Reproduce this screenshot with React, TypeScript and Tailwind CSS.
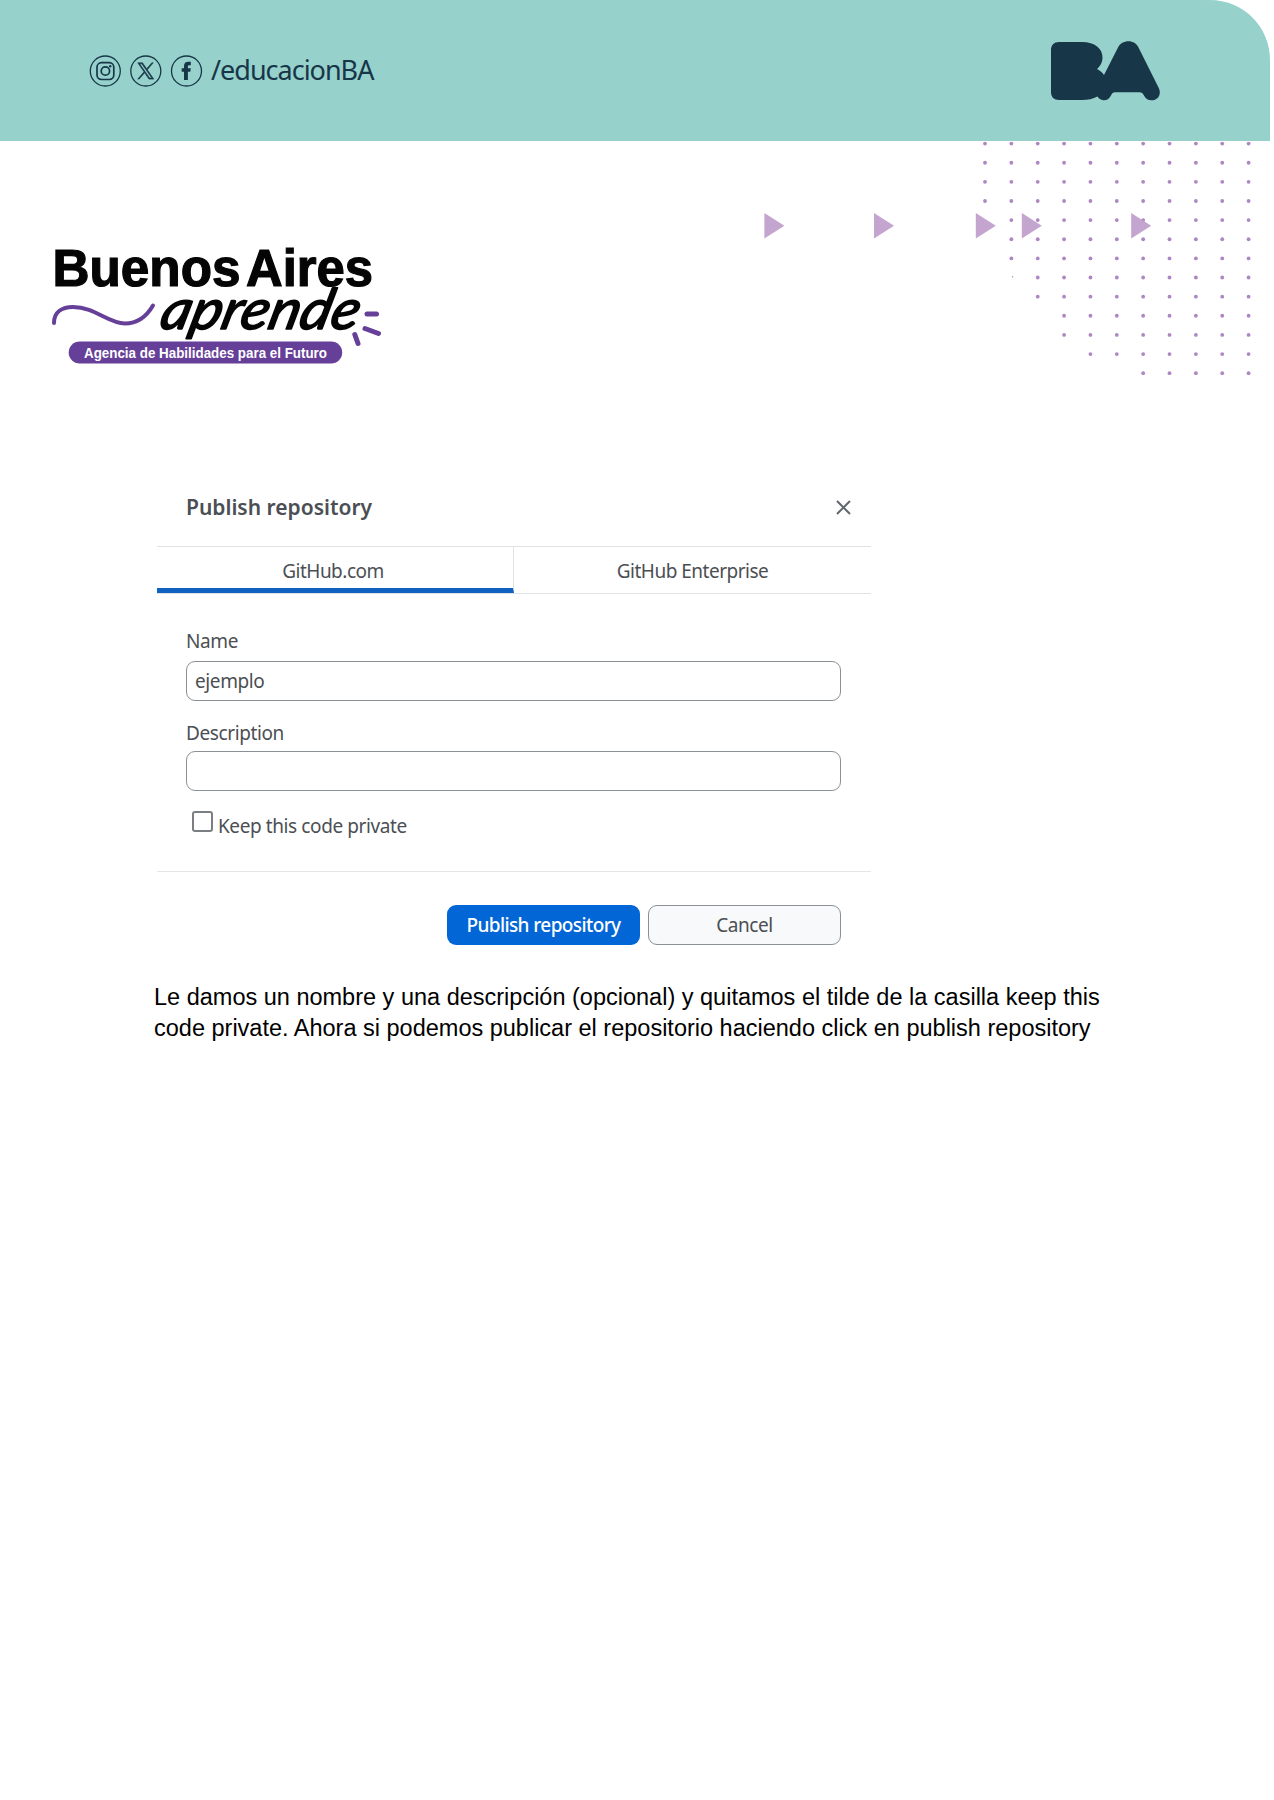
const PURPLE = "#653f98";
const NAVY = "#173647";

function SocialIcons() {
  return (
    <svg width="116" height="34" viewBox="88 53 116 34" fill="none" stroke={NAVY}>
      <g strokeWidth="1.3">
        <circle cx="105.3" cy="70" r="15" />
        <circle cx="145.8" cy="70" r="15" />
        <circle cx="186.5" cy="70" r="15" />
      </g>
      <g strokeWidth="1.7">
        <rect x="97" y="61.7" width="16.8" height="16.8" rx="4.4" />
        <circle cx="105.4" cy="70" r="4.2" />
      </g>
      <circle cx="110.2" cy="65.2" r="1.2" fill={NAVY} stroke="none" />
      <g transform="translate(137.6 61.800) scale(0.68)">
        <path
          d="M14.234 10.162 22.977 0h-2.072l-7.591 8.824L7.251 0H.258l9.168 13.343L.258 24H2.33l8.016-9.318L16.749 24h6.993zm-2.837 3.299-.929-1.329L3.076 1.56h3.182l5.965 8.532.929 1.329 7.754 11.09h-3.182z"
          fill={NAVY}
          strokeWidth="0.9"
        />
      </g>
      <path
        d="M184 79V70.700H181.700V67.200H184V64.900C184 62.200 185.600 60.700 188.300 60.700H190.800V64.300H189.300C188.300 64.300 187.900 64.800 187.900 65.600V67.200H190.800L190.300 70.700H187.900V79Z"
        fill={NAVY}
        stroke="none"
      />
    </svg>
  );
}

function CityMark() {
  return (
    <svg width="110" height="60" viewBox="1051 40.5 110 60" fill={NAVY}>
      <path d="M1059 41.5H1082C1095 41.5 1102.5 48 1102.5 57C1102.5 62 1100 66 1097 68.5C1100 70 1102.5 72 1104 74.5L1118 47C1120 43 1124 40.8 1128.5 40.8C1133 40.8 1136.5 43 1138.5 47L1159 88C1161.5 94 1158 99.8 1151.5 99.8C1147.5 99.8 1145.5 98 1144 95C1142.5 92.5 1142 91.8 1139.5 91.8H1115C1113 91.8 1112 93 1111 95C1109 98.5 1107 99.8 1104 99.8C1101.5 99.8 1099 98.5 1097.5 96C1093 98.5 1088 99.5 1082 99.5H1059C1054 99.5 1051 96.5 1051 91.5V49.5C1051 44.5 1054 41.5 1059 41.5Z" />
    </svg>
  );
}

function ProgramLogo() {
  return (
    <svg width="350" height="140" viewBox="40 235 350 140" className="mt-[94px] ml-10 shrink-0">
      <g className="font-['Liberation_Sans'] text-[51px] font-bold" stroke="#050505" strokeWidth="1.2" fill="#050505">
        <text x="52.500" y="285.500" textLength="188" lengthAdjust="spacingAndGlyphs">
          Buenos
        </text>
        <text x="246" y="285.500" textLength="127" lengthAdjust="spacingAndGlyphs">
          Aires
        </text>
      </g>
      <path d="M54 323C54 312 62 307 73 307C95 307 108 323.500 125 323.500C140 323.500 148 314 153 305.500" fill="none" stroke={PURPLE} strokeWidth="4" strokeLinecap="round" />
      <rect x="68.700" y="341.500" width="273.500" height="22" rx="11" fill={PURPLE} />
      <text x="84" y="357.500" textLength="243" lengthAdjust="spacingAndGlyphs" className="font-['Liberation_Sans'] text-[15px] font-bold" fill="#fff">
        Agencia de Habilidades para el Futuro
      </text>
      <g transform="translate(158 329) skewX(-14)">
        <text x="0" y="0" textLength="198" lengthAdjust="spacingAndGlyphs" className="font-['Lato'] text-[56px] italic" stroke="#050505" strokeWidth="1.6" strokeLinejoin="round" fill="#050505">
          aprende
        </text>
      </g>
      <g stroke={PURPLE} strokeWidth="5" strokeLinecap="round">
        <path d="M367 314H376.500" />
        <path d="M365 328.500L378.500 333.500" />
        <path d="M354.800 334.500L358 343.500" />
      </g>
    </svg>
  );
}

const FIRST_COLUMN = [0, 0, 0, 0, 1, 1, 1, 2, 2, 3, 3, 4, 6];
const ARROWS = [764.4, 874, 975.8, 1021.8, 1131.2];

function DotPattern() {
  return (
    <svg width="514" height="249" viewBox="760 141 514 249" className="shrink-0">
      {FIRST_COLUMN.map((first, row) =>
        Array.from({ length: 11 - first }, (_, i) => (
          <circle key={`${row}-${i}`} cx={985 + (first + i) * 26.36} cy={143.6 + row * 19.13} r="1.9" fill="#ae86c1" />
        )),
      )}
      <circle cx="1012.600" cy="276.800" r="0.700" fill="#ae86c1" />
      {ARROWS.map((x) => (
        <path key={x} d={`M${x} 213V238.500L${x + 20} 225.700Z`} fill="#c3a5d0" />
      ))}
    </svg>
  );
}

function PublishDialog() {
  return (
    <section className="ml-[157px] w-[714px] font-['Noto_Sans',sans-serif] text-[19px] leading-6 tracking-[-0.4px] text-[#4b4f54]">
      <div className="flex h-[76px] items-center justify-between pr-5 pb-0.5 pl-[29px]">
        <h2 className="text-[21px] font-semibold tracking-normal">Publish repository</h2>
        <svg width="15" height="15" viewBox="0 0 15 15" stroke="#5f666d" strokeWidth="2">
          <path d="M1 1L14 14M14 1L1 14" />
        </svg>
      </div>
      <div className="flex h-12 border-y border-[#dfe3e6] tracking-[-0.5px]">
        <div className="flex w-[357px] justify-center border-r border-b-[5px] border-r-[#dfe3e6] border-b-[#0f62c0] pt-3 pr-1">
          GitHub.com
        </div>
        <div className="flex flex-1 justify-center pt-3">GitHub Enterprise</div>
      </div>
      <div className="flex flex-col border-b border-[#e3e7e9] pt-[35px] pr-[30px] pb-[34px] pl-[29px]">
        <span>Name</span>
        <div className="mt-2 flex h-10 items-center rounded-[9px] border-[1.5px] border-[#8b9095] px-2">
          <span>ejemplo</span>
        </div>
        <span className="mt-5">Description</span>
        <div className="mt-1.5 h-10 rounded-[9px] border-[1.5px] border-[#8b9095]" />
        <div className="mt-5 flex h-[26px] items-start gap-[5px] pl-1.5">
          <span className="h-[21px] w-[21px] rounded-[3px] border-2 border-[#7b7f84]" />
          <span className="mt-[3px]">Keep this code private</span>
        </div>
      </div>
      <div className="flex justify-end gap-2 pt-[33px] pr-[30px]">
        <div className="flex h-10 w-[193px] items-center justify-center rounded-[9px] bg-[#0366d6] font-medium tracking-[-0.6px] text-white">
          Publish repository
        </div>
        <div className="flex h-10 w-[193px] items-center justify-center rounded-[9px] border-[1.5px] border-[#8b9095] bg-[#f7f9fa]">
          Cancel
        </div>
      </div>
    </section>
  );
}

export default function App() {
  return (
    <main className="flex min-h-[1800px] w-[1274px] flex-col bg-white">
      <header className="flex h-[141px] w-[1270px] items-center justify-between rounded-tr-[60px] bg-[#96d1cc] pr-[109px] pl-[88px]">
        <div className="flex items-center gap-[7px]">
          <SocialIcons />
          <span className="pb-0.5 font-['Noto_Sans',sans-serif] text-[27px] leading-9 tracking-[-1px] text-[#173647]">/educacionBA</span>
        </div>
        <CityMark />
      </header>
      <div className="flex h-[249px] justify-between">
        <ProgramLogo />
        <DotPattern />
      </div>
      <div className="pt-20">
        <PublishDialog />
        <p className="mt-[37px] ml-[154px] font-['Liberation_Sans',sans-serif] text-[23.5px] leading-[31px] text-black">
          Le damos un nombre y una descripción (opcional) y quitamos el tilde de la casilla keep this
          <br />
          code private. Ahora si podemos publicar el repositorio haciendo click en publish repository
        </p>
      </div>
    </main>
  );
}
